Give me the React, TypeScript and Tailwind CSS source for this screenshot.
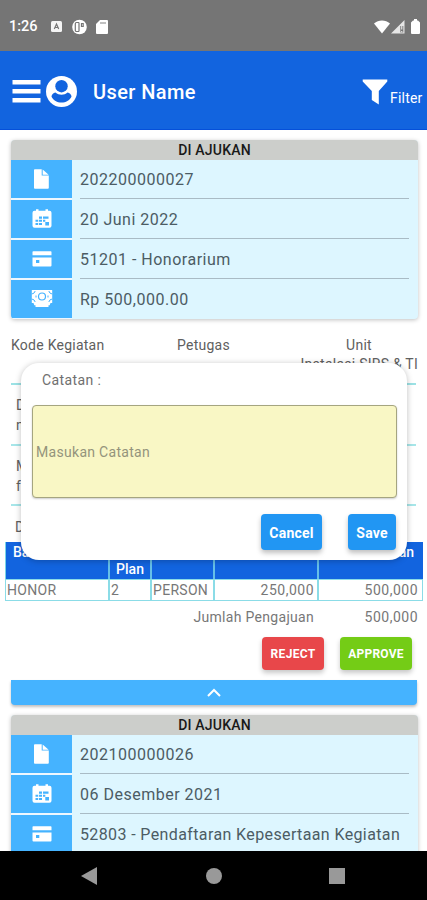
import React from "react";

type IconName = "file" | "calendar" | "card" | "money";

function RowIcon({ name }: { name: IconName }) {
  if (name === "file")
    return (
      <svg className="h-5 w-5" viewBox="0 0 20 20" fill="#fff">
        <path d="M2.900.2h6.800v6.300h7.100v12.300a.9.900 0 0 1-.9.9H2.900a.9.900 0 0 1-.9-.9V1.100a.9.900 0 0 1 .9-.9Z" />
        <path d="M10.700.4 16.600 5.700h-5.900Z" />
      </svg>
    );
  if (name === "calendar")
    return (
      <svg className="h-5 w-5" viewBox="0 0 20 20">
        <path fill="#fff" d="M2.500 1.800h1.500V.3h2.500v1.500h7V.3H16v1.500h1.500a2 2 0 0 1 2 2v13a2 2 0 0 1-2 2h-15a2 2 0 0 1-2-2v-13a2 2 0 0 1 2-2Z" />
        <path fill="#45b3ff" d="M7 7.500h3v2.200H7ZM11 7.500h5.500v2.200H11ZM3.500 10.800h2.700v2H3.500ZM7 10.800h3v2H7ZM11 10.800h2.300v2H11ZM3.500 13.900h2.700v2H3.500ZM7 13.900h3v2H7ZM13.300 12.900h3.700v3.700h-3.700Z" />
      </svg>
    );
  if (name === "card")
    return (
      <svg className="h-5 w-5" viewBox="0 0 20 20">
        <path fill="#fff" d="M1.300 2.200h17.400a.8.800 0 0 1 .8.8v3.200H.500V3a.8.800 0 0 1 .8-.8ZM.5 8.500h19v8a1 1 0 0 1-1 1h-17a1 1 0 0 1-1-1Z" />
        <path fill="#45b3ff" d="M4 11h3.300v3H4Z" />
      </svg>
    );
  return (
    <svg className="h-5 w-[22px]" viewBox="0 0 22 20">
      <path fill="#fff" d="M.8 1h20.400v12.900H.8ZM2.300 13.500h17.400l-1 2.800H3.300ZM4.500 16h13v2h-13Z" />
      <circle cx="11" cy="7.500" r="3.500" fill="none" stroke="#45b3ff" strokeWidth="1.200" />
      <path fill="none" stroke="#45b3ff" strokeWidth="1" d="M.8 5a4 4 0 0 0 3.400-3M.8 10a4 4 0 0 1 3.400 3M21.200 5a4 4 0 0 1-3.400-3M21.200 10a4 4 0 0 0-3.400 3M5 6.500v2M17 6.500v2" />
    </svg>
  );
}

function Card({ rows, className }: { rows: [IconName, string][]; className: string }) {
  return (
    <section className={"mr-[9px] ml-[11px] shrink-0 overflow-hidden rounded-[4px] bg-[#ddf6ff] shadow-[0_1px_4px_rgba(0,0,0,0.25)] " + className}>
      <h2 className="h-5 bg-[#cccecb] text-center text-[14px] leading-5 font-medium tracking-[0.2px] text-[#191919]">DI AJUKAN</h2>
      {rows.map(([icon, text], i) => (
        <div key={text} className="flex h-10">
          <div className="flex h-[38px] w-[61px] items-center justify-center bg-[#45b3ff] shadow-[0_2px_0_#eef7ff]">
            <RowIcon name={icon} />
          </div>
          <div className={"ml-2 h-[39px] w-[329px] border-b text-[16px] leading-[39px] whitespace-nowrap text-[#4c5c64] " + (i < 3 ? "border-[#a9bbc5] " : "border-transparent ") + (text.length > 20 ? "tracking-[0.38px]" : "tracking-[0.5px]")}>
            {text}
          </div>
        </div>
      ))}
    </section>
  );
}

function StatusBar() {
  return (
    <div className="flex h-[51px] shrink-0 items-center bg-[#757575] pt-[2px] pr-[7px] pl-[9px] text-white">
      <span className="w-[42px] pt-px text-[14.500px] font-medium">1:26</span>
      <svg className="h-[13px] w-[11px]" viewBox="0 0 11 13">
        <rect y="1" width="11" height="11" rx="1.500" fill="#f4f4f4" />
        <path d="M3.300 9 5.500 4l2.200 5M4.200 7.500h2.600" fill="none" stroke="#757575" strokeWidth="1.200" />
      </svg>
      <svg className="ml-[10px] h-4 w-[15px]" viewBox="0 0 15 16">
        <circle cx="7.500" cy="8" r="7.300" fill="#fff" />
        <path d="M7 3.500H4.500a1.200 1.200 0 0 0-1.200 1.200v6.600a1.200 1.200 0 0 0 1.200 1.200H7M7 3.500v9M9.500 4.500h1.700v3H9.500Z" fill="none" stroke="#757575" strokeWidth="1.200" />
      </svg>
      <svg className="ml-[9px] h-[14px] w-3" viewBox="0 0 12 14">
        <path d="M4 0h7a1 1 0 0 1 1 1v12a1 1 0 0 1-1 1H1a1 1 0 0 1-1-1V4Z" fill="#fff" />
        <path d="M5 2v2M7 2v2M9 2v2" stroke="#757575" strokeWidth=".9" />
      </svg>
      <svg className="ml-auto h-[14px] w-4" viewBox="0 0 16 14">
        <path d="M0 3.500C4.500-.6 11.500-.6 16 3.500L8 13.500Z" fill="#fff" />
      </svg>
      <svg className="ml-[1px] h-[14px] w-[14px]" viewBox="0 0 14 14">
        <path d="M0 13.500 13.500 0v13.500Z" fill="#e6e6e6" />
        <path d="M9.300 6h3v6.500h-3Z" fill="#757575" />
        <path d="M10.800 6v3.500M10.800 11v1.300" stroke="#fff" />
      </svg>
      <svg className="ml-[6px] h-[15px] w-[9px]" viewBox="0 0 9 15">
        <path d="M3 0h3v1.500h1L9 3.500V14a1 1 0 0 1-1 1H1a1 1 0 0 1-1-1V3.500l2-2h1Z" fill="#fff" />
      </svg>
    </div>
  );
}

function Header() {
  return (
    <header className="flex h-[79px] shrink-0 items-center border-b border-[#0550da] bg-[#1264df] pt-[3px] pl-3 text-white">
      <svg className="h-6 w-[29px]" viewBox="0 0 29 24">
        <path d="M.5 0h28v4.600H.5ZM.5 9h28v4.600H.5ZM.5 18h28v4.600H.5Z" fill="#fff" />
      </svg>
      <svg className="ml-1 h-8 w-[33px]" viewBox="0 0 32 32">
        <circle cx="16" cy="15.500" r="15.500" fill="#fff" />
        <circle cx="16" cy="10.200" r="6.200" fill="#1264df" />
        <path d="M6 20.700c0-2.200 1.800-3.900 4-4.200 1.700 1.500 3.800 2.200 6 2.200s4.300-.7 6-2.200c2.200.3 4 2 4 4.200-2 3.600-5.600 5.800-10 5.800s-8-2.200-10-5.800Z" fill="#1264df" />
      </svg>
      <span className="ml-[15px] pt-px text-[20px] font-medium tracking-[0.4px]">User Name</span>
      <svg className="ml-auto h-[26px] w-[26px]" viewBox="0 0 26 26">
        <path d="M.7.500h24.600v2L16.800 12v13.500L9.800 21v-9L.7 2.500Z" fill="#fff" />
      </svg>
      <span className="mt-[14px] mr-[4px] ml-[2px] w-[33px] text-[14px] tracking-[0.2px]">Filter</span>
    </header>
  );
}

function Details() {
  return (
    <section className="h-[223px] shrink-0 pt-[16px] text-[14px] tracking-[0.25px] text-[#606060]">
      <div className="mx-[11px] grid h-[50px] grid-cols-[166px_123px_118px] grid-rows-[19px_20px] border-b-2 border-[#9ce2e5] leading-5">
        <span>Kode Kegiatan</span><span>Petugas</span><span className="text-center">Unit</span>
        <span className="col-span-2 col-start-2 text-right">Instalasi SIRS &amp; TI</span>
      </div>
      <div className="mx-[11px] h-[61px] border-b-2 border-[#a7e6e9] pt-[10px] pl-[5px] leading-5"><p>D</p><p>n</p></div>
      <div className="mx-[11px] h-[60px] border-b-2 border-[#a7e6e9] pt-[10px] pl-[5px] leading-5"><p>M</p><p>f</p></div>
      <p className="pt-[11px] pl-[15px] leading-5">D</p>
    </section>
  );
}

function BudgetTable() {
  const cells = ["HONOR", "2", "PERSON", "250,000", "500,000"];
  const heads = ["Ba", "Plan", "", "", "an"];
  return (
    <div className="mr-[4px] ml-[5px] grid h-[59px] shrink-0 grid-cols-[103px_42px_63px_104px_106px] grid-rows-[37px_22px] text-[14px]">
      {heads.map((h, i) => (
        <div key={i} className={"bg-[#1264df] px-[7px] font-medium text-white " + (i === 0 ? "border-l border-[#78d6e7] " : "border-l-2 border-[#65bfe8] ") + (i === 1 ? "flex items-end justify-center leading-[20px]" : i === 4 ? "pr-[9px] text-right leading-5" : "leading-5")}>
          {h}
        </div>
      ))}
      {cells.map((c, i) => (
        <div key={i} className={"border-y border-[#8bdce7] leading-[21px] whitespace-nowrap text-[#777] " + (i === 0 ? "border-l " : "border-l-2 ") + (i > 2 ? "text-right tracking-[0.5px] " : "pl-[1px] tracking-[0.3px] ") + (i === 4 ? "border-r pr-1" : i === 3 ? "pr-[3px]" : "")}>
          {c}
        </div>
      ))}
    </div>
  );
}

function NoteDialog() {
  return (
    <div className="absolute top-[363px] left-[21px] h-[197px] w-[386px] rounded-[18px] bg-white px-[11px] shadow-[0_1px_6px_rgba(0,0,0,0.25)]">
      <p className="h-[42px] pt-[7px] pl-[10px] text-[14px] leading-5 tracking-[0.400px] text-[#707070]">Catatan :</p>
      <div className="flex h-[93px] w-[365px] items-center rounded-[4px] border border-[#a5a580] bg-[#f9f7c5] pt-px pl-[3px] text-[14px] tracking-[0.300px] text-[#94947c] shadow-[0_1px_2px_rgba(0,0,0,0.2)]">
        Masukan Catatan
      </div>
      <div className="mt-4 flex justify-end gap-[26px] text-[14px] font-bold tracking-[0.200px] text-white">
        <button className="h-9 w-[61px] rounded-[4px] bg-[#2196f3] pt-[2px] shadow-[0_3px_5px_rgba(0,0,0,0.25)]">Cancel</button>
        <button className="h-9 w-[48px] rounded-[4px] bg-[#2196f3] pt-[2px] shadow-[0_3px_5px_rgba(0,0,0,0.25)]">Save</button>
      </div>
    </div>
  );
}

export default function App() {
  return (
    <main className="relative flex h-[900px] w-[427px] flex-col overflow-hidden bg-white font-[Roboto,sans-serif]">
      <StatusBar />
      <Header />
      <div className="flex h-[721px] shrink-0 flex-col overflow-hidden">
        <Card className="mt-[10px] h-[179px]" rows={[["file", "202200000027"], ["calendar", "20 Juni 2022"], ["card", "51201 - Honorarium"], ["money", "Rp 500,000.00"]]} />
        <Details />
        <BudgetTable />
        <div className="flex h-9 shrink-0 justify-end pt-[6px] pr-[9px] text-[14px] leading-5 tracking-[0.5px] text-[#777]">
          <span className="tracking-[0.3px]">Jumlah Pengajuan</span><span className="w-[104px] text-right">500,000</span>
        </div>
        <div className="flex h-[43px] shrink-0 justify-end gap-4 pr-[15px] text-[12px] font-bold text-white">
          <button className="h-[33px] w-[62px] rounded-[4px] bg-[#e8474a] pt-px tracking-[0.3px] shadow-[0_3px_5px_rgba(0,0,0,0.22)]">REJECT</button>
          <button className="h-[33px] w-[72px] rounded-[4px] bg-[#74cc16] pt-px tracking-[0.2px] shadow-[0_3px_5px_rgba(0,0,0,0.22)]">APPROVE</button>
        </div>
        <div className="mr-[10px] ml-[11px] flex h-[25px] shrink-0 items-center justify-center rounded-b-[4px] bg-[#45b3ff] shadow-[0_2px_3px_rgba(0,0,0,0.25)]">
          <svg className="h-[10px] w-4" viewBox="0 0 16 10"><path d="m2 8 6-6 6 6" fill="none" stroke="#fff" strokeWidth="2" /></svg>
        </div>
        <Card className="mt-[10px] h-[179px]" rows={[["file", "202100000026"], ["calendar", "06 Desember 2021"], ["card", "52803 - Pendaftaran Kepesertaan Kegiatan"]]} />
      </div>
      <nav className="flex h-[49px] shrink-0 items-center bg-black pl-[81px]">
        <svg className="h-[18px] w-4" viewBox="0 0 16 18"><path d="M0 9 16 0v18Z" fill="#999" /></svg>
        <span className="ml-[109px] h-4 w-4 rounded-full bg-[#999]" />
        <span className="ml-[107px] h-4 w-4 bg-[#999]" />
      </nav>
      <NoteDialog />
    </main>
  );
}
